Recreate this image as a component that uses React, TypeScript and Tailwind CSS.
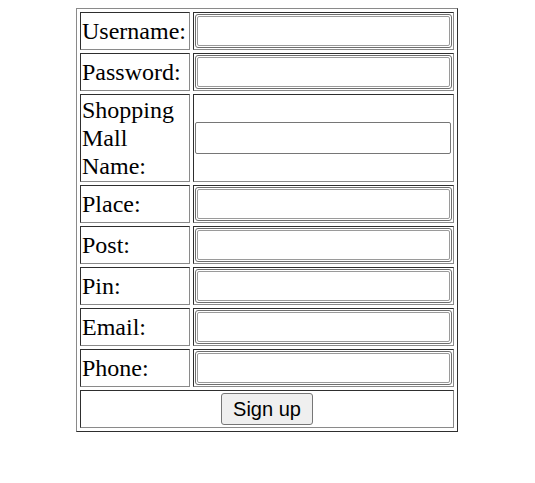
const rows = ["Username:", "Password:", "Shopping Mall Name:", "Place:", "Post:", "Pin:", "Email:", "Phone:"];

const cell =
  "border border-t-[#2e2e2e] border-l-[#2e2e2e] border-r-[#8a8a8a] border-b-[#8a8a8a] p-px align-middle";

function Field({ single }: { single: boolean }) {
  if (single) {
    return (
      <div className="pl-0 pr-px">
        <input
          type="text"
          className="block w-full h-[32px] bg-white border border-[#767676] rounded-[2px] outline-none"
        />
      </div>
    );
  }
  return (
    <div className="border border-[#6e6e6e] rounded-[3px] p-px">
      <input
        type="text"
        className="block w-full h-[30px] bg-white border border-[#9a9a9a] rounded-[2px] outline-none"
      />
    </div>
  );
}

export default function App() {
  return (
    <div className="min-h-[483px] bg-white pt-2 pr-px font-['Liberation_Serif','Times_New_Roman',serif] text-black">
      <table className="mx-auto w-[382px] border-separate border-spacing-[3px] border border-t-[#8a8a8a] border-l-[#8a8a8a] border-r-[#2e2e2e] border-b-[#2e2e2e]">
        <tbody>
          {rows.map((label) => (
            <tr key={label}>
              <td className={`${cell} w-[110px] h-[38px] text-[24px] leading-[28px]`}>{label}</td>
              <td className={`${cell} w-[261px] h-[38px]`}>
                <Field single={label === "Shopping Mall Name:"} />
              </td>
            </tr>
          ))}
          <tr>
            <td colSpan={2} className={`${cell} h-[38px] text-center`}>
              <button
                type="submit"
                className="inline-block align-middle h-[32px] px-[11px] bg-[#efefef] border border-[#767676] rounded-[3px] font-['Liberation_Sans',Arial,sans-serif] text-[20px] leading-[23px] text-black"
              >
                Sign up
              </button>
            </td>
          </tr>
        </tbody>
      </table>
    </div>
  );
}
